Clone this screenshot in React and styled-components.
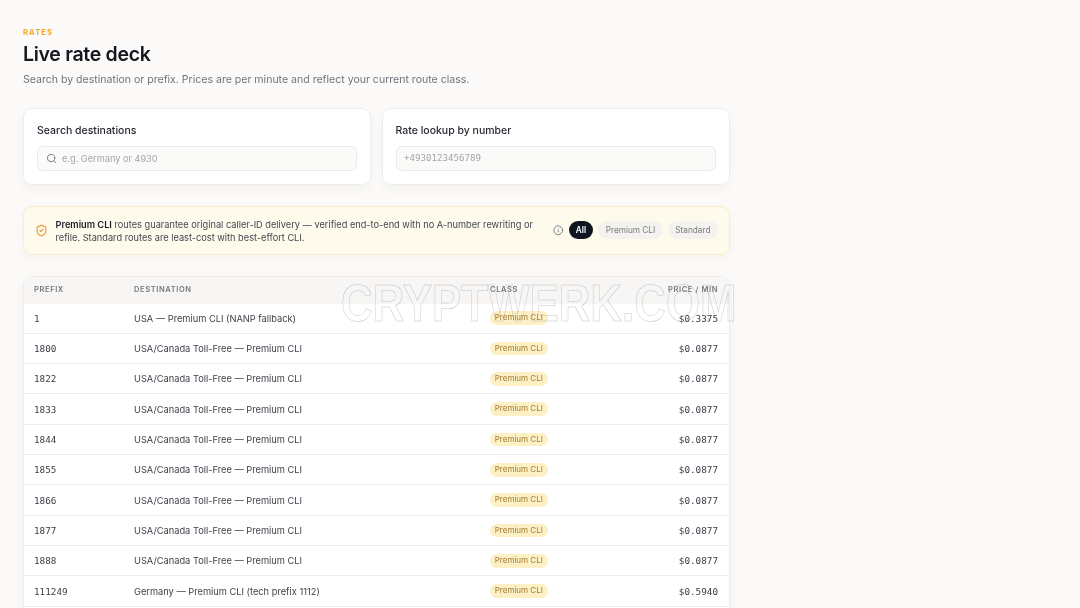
import React from "react";
import styled, { createGlobalStyle } from "styled-components";
import { Search, ShieldCheck, Info } from "lucide-react";

const Global = createGlobalStyle`
  html, body { margin: 0; padding: 0; height: 608px; overflow: hidden; background: #fbfaf9; }
  body { font-family: Inter, "Liberation Sans", sans-serif; color: #14171f; }
`;

const Page = styled.main`
  position: relative;
  width: 1080px;
  height: 608px;
  overflow: hidden;
  box-sizing: border-box;
  padding: 27px 0 0 23px;
  filter: blur(0.3px);
`;
const Content = styled.div`
  width: 706.5px;
  display: flex;
  flex-direction: column;
`;
const Eyebrow = styled.div`
  font-size: 7.5px;
  line-height: 11px;
  font-weight: 700;
  letter-spacing: 1.15px;
  color: #f0a92e;
`;
const Title = styled.h1`
  margin: 2px 0 0;
  font-size: 19.5px;
  line-height: 28px;
  font-weight: 600;
  letter-spacing: -0.3px;
  color: #14171f;
`;
const Subtitle = styled.p`
  margin: 4px 0 0;
  font-size: 10.55px;
  line-height: 16px;
  color: #71747b;
`;
const Cards = styled.section`
  margin-top: 20px;
  display: grid;
  grid-template-columns: 1fr 1fr;
  gap: 10.5px;
`;
const Card = styled.div`
  box-sizing: border-box;
  height: 76.5px;
  padding: 13.5px 13px 0;
  background: #fff;
  border: 1px solid #eeedeb;
  border-radius: 9px;
  box-shadow: 0 4px 12px rgba(30, 25, 15, 0.04);
  display: flex;
  flex-direction: column;
`;
const CardLabel = styled.div`
  font-size: 10.5px;
  line-height: 16px;
  font-weight: 500;
  color: #262932;
`;
const Field = styled.div`
  margin-top: 7px;
  height: 25.5px;
  box-sizing: border-box;
  display: flex;
  align-items: center;
  gap: 5.5px;
  padding: 0 7.5px;
  background: #fafaf8;
  border: 1px solid #ebeae7;
  border-radius: 6px;
  color: #6f7279;
`;
const Placeholder = styled.span`
  font-family: ${p => (p.$mono ? '"DejaVu Sans Mono", monospace' : 'Inter, sans-serif')};
  font-size: ${p => (p.$mono ? "9.15px" : "9.2px")};
  color: #a3a5a9;
`;
const Banner = styled.section`
  margin-top: 21.5px;
  box-sizing: border-box;
  height: 48.5px;
  display: flex;
  align-items: center;
  padding: 0 10.5px 0 11px;
  background: #fefbed;
  border: 1px solid #f8edc4;
  border-radius: 9px;
  box-shadow: 0 3px 10px rgba(60, 45, 10, 0.03);
`;
const ShieldWrap = styled.span`
  display: flex;
  color: #ea9a3c;
  margin-right: 7.5px;
`;
const BannerText = styled.p`
  margin: 0.5px 0 0;
  width: 488px;
  font-size: 9.23px;
  line-height: 13px;
  color: #43464e;
  strong { font-weight: 600; color: #1b1e26; }
`;
const Filters = styled.div`
  margin-left: auto;
  display: flex;
  align-items: center;
  gap: 5px;
  color: #6e7076;
`;
const Pill = styled.button`
  border: 0;
  height: 18px;
  padding: 0 ${p => (p.$active ? "7px" : "7.5px")};
  border-radius: 9px;
  font-family: Inter, sans-serif;
  font-size: 8.25px;
  font-weight: ${p => (p.$active ? 600 : 400)};
  background: ${p => (p.$active ? "#0e1420" : "#f3f2ef")};
  color: ${p => (p.$active ? "#fff" : "#7a7c81")};
`;
const Table = styled.div`
  margin-top: 21.5px;
  background: #fff;
  border: 1px solid #eeedeb;
  border-radius: 9px 9px 0 0;
  overflow: hidden;
  box-shadow: 0 4px 12px rgba(30, 25, 15, 0.04);
`;
const Row = styled.div`
  display: grid;
  grid-template-columns: 100px 356px 1fr auto;
  align-items: center;
  box-sizing: border-box;
  height: 30.33px;
  padding: 0 10.5px 0 10px;
  border-bottom: 1px solid #eeedeb;
`;
const HeadRow = styled(Row)`
  height: 26.5px;
  padding-bottom: 1.5px;
  background: #f7f6f4;
  border-bottom: 0;
`;
const Head = styled.div`
  font-size: 7.5px;
  font-weight: 600;
  letter-spacing: 0.62px;
  color: #74767c;
  text-transform: uppercase;
`;
const Prefix = styled.div`
  font-family: "DejaVu Sans Mono", monospace;
  font-size: 9.3px;
  color: #3a3d45;
`;
const Destination = styled.div`
  font-size: 9.27px;
  color: #3f424a;
`;
const Badge = styled.span`
  justify-self: start;
  display: inline-block;
  padding: 0 4.75px;
  height: 13.5px;
  line-height: 13.5px;
  border-radius: 7px;
  font-size: 8px;
  background: #fdf0c4;
  color: #a17a35;
`;
const Price = styled.div`
  font-family: "DejaVu Sans Mono", monospace;
  font-size: 9.3px;
  color: #3a3d45;
  text-align: right;
`;
const Watermark = styled.div`
  position: absolute;
  left: 341px;
  top: 279px;
  font-family: "Liberation Sans", Arial, sans-serif;
  font-weight: 700;
  font-size: 51px;
  line-height: 50px;
  transform: scaleX(0.86);
  transform-origin: left center;
  color: transparent;
  -webkit-text-stroke: 0.5px rgba(150, 150, 155, 0.55);
  white-space: nowrap;
  pointer-events: none;
`;

const rows = [
  ["1", "USA — Premium CLI (NANP fallback)", "$0.3375"],
  ["1800", "USA/Canada Toll-Free — Premium CLI", "$0.0877"],
  ["1822", "USA/Canada Toll-Free — Premium CLI", "$0.0877"],
  ["1833", "USA/Canada Toll-Free — Premium CLI", "$0.0877"],
  ["1844", "USA/Canada Toll-Free — Premium CLI", "$0.0877"],
  ["1855", "USA/Canada Toll-Free — Premium CLI", "$0.0877"],
  ["1866", "USA/Canada Toll-Free — Premium CLI", "$0.0877"],
  ["1877", "USA/Canada Toll-Free — Premium CLI", "$0.0877"],
  ["1888", "USA/Canada Toll-Free — Premium CLI", "$0.0877"],
  ["111249", "Germany — Premium CLI (tech prefix 1112)", "$0.5940"],
  ["", "", ""],
];

export default function App() {
  return (
    <Page>
      <Global />
      <Content>
        <Eyebrow>RATES</Eyebrow>
        <Title>Live rate deck</Title>
        <Subtitle>Search by destination or prefix. Prices are per minute and reflect your current route class.</Subtitle>
        <Cards>
          <Card>
            <CardLabel>Search destinations</CardLabel>
            <Field>
              <Search size={11} strokeWidth={2} />
              <Placeholder>e.g. Germany or 4930</Placeholder>
            </Field>
          </Card>
          <Card>
            <CardLabel>Rate lookup by number</CardLabel>
            <Field>
              <Placeholder $mono>+4930123456789</Placeholder>
            </Field>
          </Card>
        </Cards>
        <Banner>
          <ShieldWrap><ShieldCheck size={13} strokeWidth={2} /></ShieldWrap>
          <BannerText>
            <strong>Premium CLI</strong> routes guarantee original caller-ID delivery — verified end-to-end with no A-number rewriting or refile. Standard routes are least-cost with best-effort CLI.
          </BannerText>
          <Filters>
            <Info size={10.5} strokeWidth={2} />
            <Pill $active>All</Pill>
            <Pill>Premium CLI</Pill>
            <Pill>Standard</Pill>
          </Filters>
        </Banner>
        <Table>
          <HeadRow>
            <Head>Prefix</Head>
            <Head>Destination</Head>
            <Head>Class</Head>
            <Head>Price / min</Head>
          </HeadRow>
          {rows.map((r, i) => (
            <Row key={i}>
              <Prefix>{r[0]}</Prefix>
              <Destination>{r[1]}</Destination>
              {r[0] ? <Badge>Premium CLI</Badge> : <span />}
              <Price>{r[2]}</Price>
            </Row>
          ))}
        </Table>
      </Content>
      <Watermark>CRYPTWERK.COM</Watermark>
    </Page>
  );
}
